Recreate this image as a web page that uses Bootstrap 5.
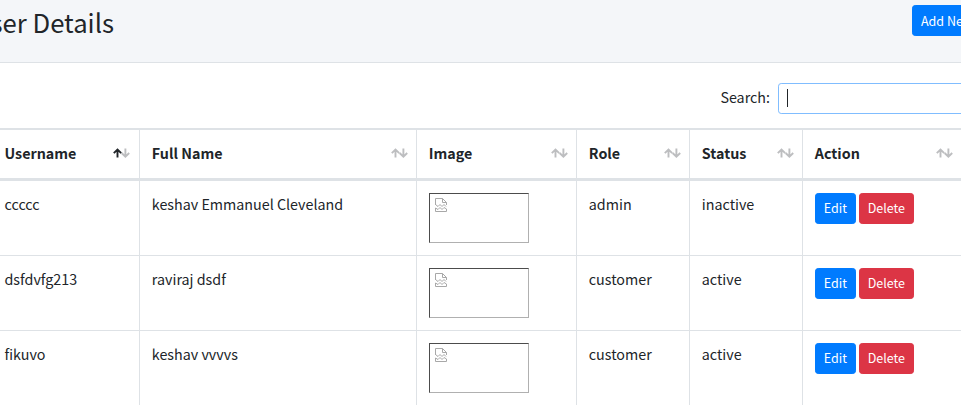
<!DOCTYPE html>
<html lang="en">
<head>
<meta charset="utf-8">
<meta name="viewport" content="width=device-width, initial-scale=1">
<title>User Details</title>
<link href="https://cdn.jsdelivr.net/npm/bootstrap@5.3.0/dist/css/bootstrap.min.css" rel="stylesheet">
<style>
body{font-family:"Noto Sans CJK SC","Noto Sans",sans-serif;font-size:14.3px;line-height:22px;color:#212529;width:961px;height:405px;overflow:hidden;background:#fff}
.page-head{height:63px;background:#f4f6f9;border-bottom:1px solid #dee2e6}
.page-title{font-size:25.7px;line-height:34px;width:200px;margin:5px 0 0 -86px;text-align:right;font-weight:400;white-space:nowrap}
.btn{--bs-btn-font-size:12.5px;--bs-btn-line-height:21px;--bs-btn-padding-x:8px;--bs-btn-padding-y:4px;--bs-btn-border-radius:3.2px;--bs-btn-color:#fff;height:31px;padding-top:3px;padding-bottom:5px;white-space:nowrap}
.btn-primary{--bs-btn-bg:#007bff;--bs-btn-border-color:#007bff}
.btn-danger{--bs-btn-bg:#dc3545;--bs-btn-border-color:#dc3545}
.btn-add{width:104px;margin:5px -55px 0 0;padding-top:4px;padding-bottom:4px}
.btn-edit{width:41px;padding-left:0;padding-right:0}
.btn-del{width:55px;padding-left:0;padding-right:0}
.acts{gap:3px}
.search-row{height:65px;padding-top:20px;margin-right:-24px}
.search-label{padding-top:3px}
.search-box{width:207px;height:31px;border:1px solid #80bdff;border-radius:3.2px;margin-left:8px;padding:5px 0 0 8px}
.caret{display:block;width:1px;height:18px;background:#212529}
.users{width:971px;margin:0 0 0 -8px;table-layout:fixed;border-collapse:separate;border-spacing:0;--bs-table-color:#212529}
.users>:not(caption)>*>*{padding:12px 12px 12px 11.800px;border:0 solid #dee2e6;border-left-width:1px;border-bottom-width:1px;vertical-align:top;white-space:nowrap}
.users>thead>tr>th{height:53px;border-top-width:2px;border-bottom-width:3px;font-weight:700}
.users>tbody>tr>td{height:75px}
.users>*>tr>:first-child{padding-left:11.500px}
.sort{display:block;width:17px;height:11px;margin:6px -4px 0 0;fill:none;stroke:#bdbec0;stroke-width:1.9}
.users th:first-child .sort{margin-right:-3px}
.users th:last-child .sort{margin-right:-2px}
.sort .on{stroke:#212529}
.thumb{width:100px;height:50px;margin-left:.2px;border:1px solid;border-color:#4c4c4c #b0b0b0 #b0b0b0 #4c4c4c;padding:4px 5px}
.thumb svg{display:block;fill:none;stroke:#a8a8a8}
</style>
<script src="https://cdn.jsdelivr.net/npm/bootstrap@5.3.0/dist/js/bootstrap.bundle.min.js"></script>
</head>
<body>
<svg class="d-none">
<symbol id="up" viewBox="0 0 17 11"><path d="M4.500 9.500V1.500M.8 5.200l3.700-3.700 3.700 3.700"/></symbol>
<symbol id="down" viewBox="0 0 17 11"><path d="M12.400.5V8.700M8.600 5l3.800 3.700L16.200 5"/></symbol>
<symbol id="broken" viewBox="0 0 12 14"><path d="M.5 7V.5h7l4 4V7M7.500.5v4h4M.5 6.500l2.500 2 2-2 2 2 2-2 2 2M.5 13.500V10l2.500 1.500 2-2 2 2 2-2 2.500 1.500v2.500z"/></symbol>
</svg>
<header class="page-head d-flex justify-content-between align-items-start">
<h1 class="page-title">User Details</h1>
<button class="btn btn-primary btn-add text-start">Add New User</button>
</header>
<main>
<div class="search-row d-flex justify-content-end">
<label class="search-label">Search:</label><div class="search-box" role="textbox"><span class="caret"></span></div>
</div>
<table class="table users">
<colgroup><col style="width:147px"><col style="width:277px"><col style="width:160px"><col style="width:113px"><col style="width:113px"><col style="width:161px"></colgroup>
<thead><tr>
<th><div class="d-flex justify-content-between">Username<svg class="sort"><use class="on" href="#up"/><use href="#down"/></svg></div></th>
<th><div class="d-flex justify-content-between">Full Name<svg class="sort"><use href="#up"/><use href="#down"/></svg></div></th>
<th><div class="d-flex justify-content-between">Image<svg class="sort"><use href="#up"/><use href="#down"/></svg></div></th>
<th><div class="d-flex justify-content-between">Role<svg class="sort"><use href="#up"/><use href="#down"/></svg></div></th>
<th><div class="d-flex justify-content-between">Status<svg class="sort"><use href="#up"/><use href="#down"/></svg></div></th>
<th><div class="d-flex justify-content-between">Action<svg class="sort"><use href="#up"/><use href="#down"/></svg></div></th>
</tr></thead>
<tbody>
<tr><td>ccccc</td><td>keshav Emmanuel Cleveland</td><td><div class="thumb"><svg width="12" height="14"><use href="#broken"/></svg></div></td><td>admin</td><td>inactive</td><td><div class="d-flex acts"><button class="btn btn-primary btn-edit">Edit</button><button class="btn btn-danger btn-del">Delete</button></div></td></tr>
<tr><td>dsfdvfg213</td><td>raviraj dsdf</td><td><div class="thumb"><svg width="12" height="14"><use href="#broken"/></svg></div></td><td>customer</td><td>active</td><td><div class="d-flex acts"><button class="btn btn-primary btn-edit">Edit</button><button class="btn btn-danger btn-del">Delete</button></div></td></tr>
<tr><td>fikuvo</td><td>keshav vvvvs</td><td><div class="thumb"><svg width="12" height="14"><use href="#broken"/></svg></div></td><td>customer</td><td>active</td><td><div class="d-flex acts"><button class="btn btn-primary btn-edit">Edit</button><button class="btn btn-danger btn-del">Delete</button></div></td></tr>
</tbody>
</table>
</main>
</body>
</html>
